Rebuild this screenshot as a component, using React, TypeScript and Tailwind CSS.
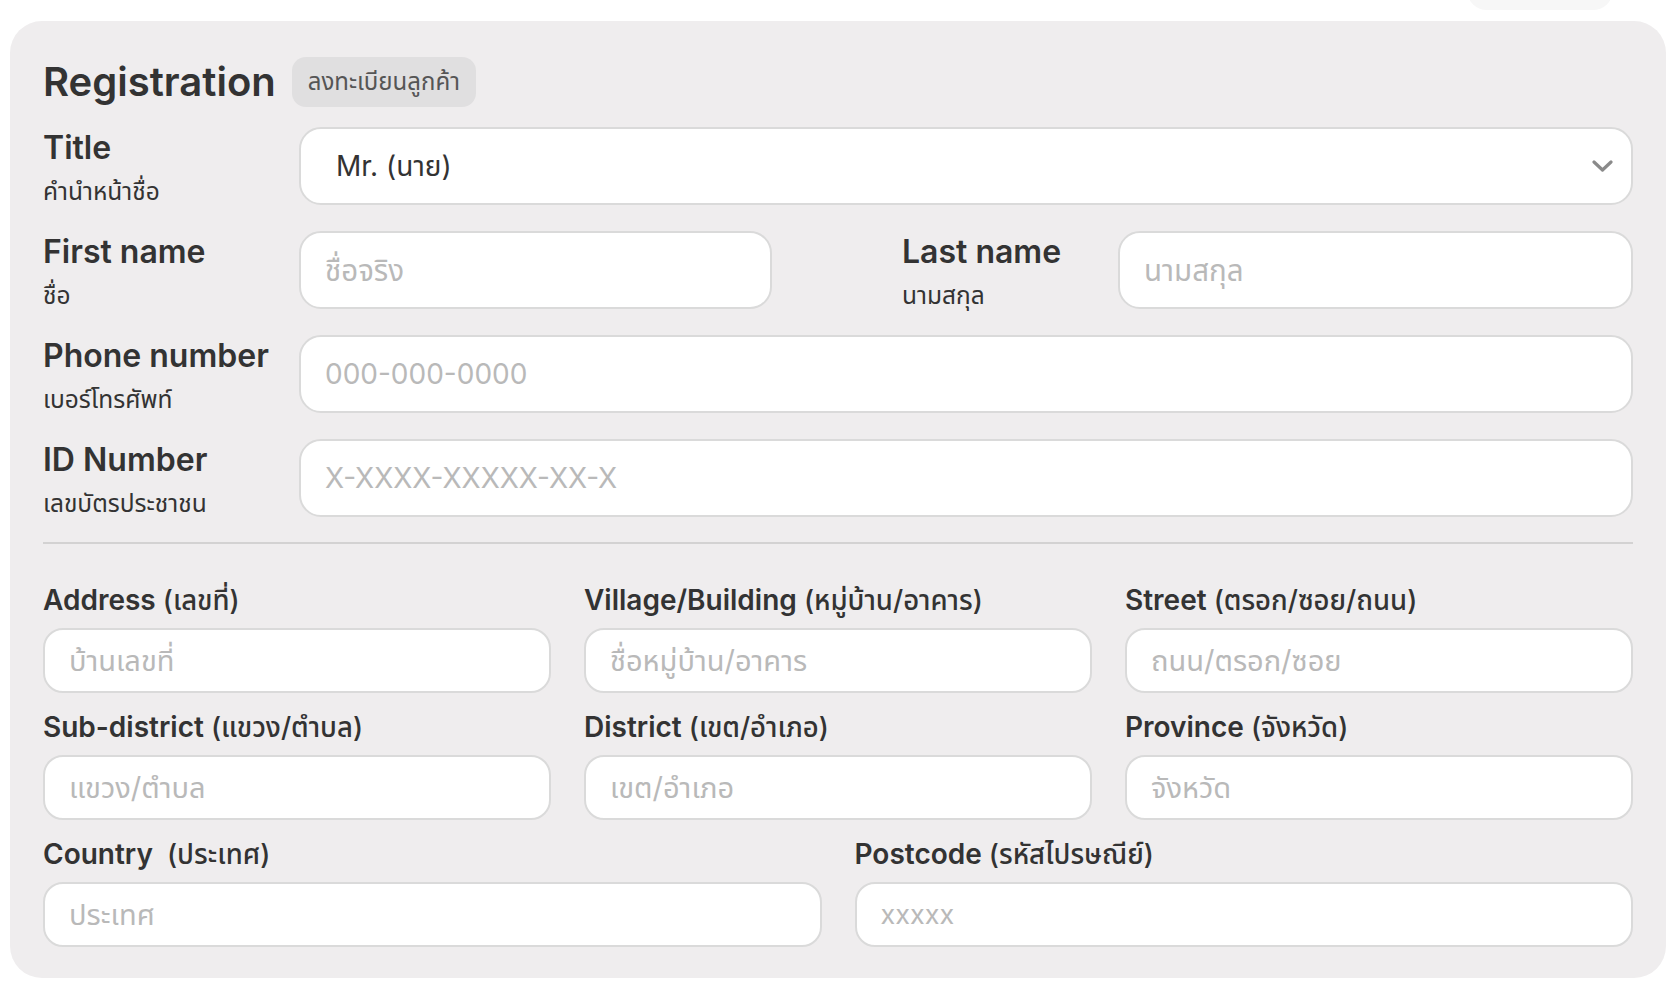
import React from "react";

const font = {
  fontFamily: "Inter, 'Noto Sans Thai', 'Noto Sans Thai UI', 'Noto Sans', 'Liberation Sans', sans-serif",
};

function BigLabel({ en, th }: { en: string; th: string }) {
  return (
    <div className="flex h-[78px] flex-col pt-[2px]">
      <span className="h-[38px] text-[32px] font-semibold leading-[38px] text-[#333]">{en}</span>
      <span className="mt-[9px] h-[30px] text-[24.5px] leading-[30px] text-[#333]">{th}</span>
    </div>
  );
}

function BigInput({ placeholder, className = "" }: { placeholder: string; className?: string }) {
  return (
    <input
      placeholder={placeholder}
      className={
        "h-[78px] rounded-[22px] border-2 border-[#dadada] bg-white px-[24px] text-[#333] outline-none placeholder:text-[#b9b9b9] " +
        className
      }
    />
  );
}

function SmallField({
  en,
  th,
  placeholder,
  size = "text-[29px]",
}: {
  en: string;
  th: string;
  placeholder: string;
  size?: string;
}) {
  return (
    <div className="flex flex-col">
      <div className="h-[34px] overflow-visible whitespace-nowrap leading-[34px] text-[#333]">
        <span className="text-[28px] font-semibold">{en}</span>
        <span className="text-[27.5px] font-medium">{th}</span>
      </div>
      <input
        placeholder={placeholder}
        className={
          "mt-[11px] h-[65px] rounded-[20px] border-2 border-[#dadada] bg-white px-[24px] text-[#333] outline-none placeholder:text-[#b9b9b9] " +
          size
        }
      />
    </div>
  );
}

export default function App() {
  return (
    <div style={font} className="relative min-h-screen bg-white pt-[21px]">
      <div className="absolute left-[1467px] top-[-30px] h-[40px] w-[146px] rounded-full bg-[#f7f7f7]" />
      <div className="relative ml-[10px] mr-[14px] rounded-[32px] bg-[#efedee] px-[33px] pb-[31px] pt-[36px]">
        {/* header */}
        <div className="flex h-[50px] items-center gap-[16px]">
          <h1 className="text-[40px] font-semibold text-[#333]">Registration</h1>
          <span className="flex h-[50px] items-center rounded-[14px] bg-[#e0dfe0] px-[16px] text-[24px] text-[#555]">
            ลงทะเบียนลูกค้า
          </span>
        </div>

        <div className="mt-[20px] flex flex-col gap-[26px]">
          {/* title */}
          <div className="flex items-start">
            <div className="w-[256px]">
              <BigLabel en="Title" th="คำนำหน้าชื่อ" />
            </div>
            <div className="relative flex-1">
              <select
                defaultValue="mr"
                className="h-[78px] w-full appearance-none rounded-[22px] border-2 border-[#dadada] bg-white pl-[35px] text-[28px] text-[#333] outline-none"
              >
                <option value="mr">Mr. (นาย)</option>
                <option value="mrs">Mrs. (นาง)</option>
                <option value="ms">Ms. (นางสาว)</option>
              </select>
              <svg
                className="pointer-events-none absolute right-[20px] top-[33px]"
                width="21"
                height="12"
                viewBox="0 0 21 12"
                fill="none"
              >
                <polyline points="2,2 10.5,10 19,2" stroke="#8a8a8a" strokeWidth="3.2" strokeLinecap="round" strokeLinejoin="round" />
              </svg>
            </div>
          </div>

          {/* names */}
          <div className="flex items-start">
            <div className="w-[256px]">
              <BigLabel en="First name" th="ชื่อ" />
            </div>
            <BigInput placeholder="ชื่อจริง" className="w-[473px] text-[29.5px]" />
            <div className="ml-[130px] w-[216px]">
              <BigLabel en="Last name" th="นามสกุล" />
            </div>
            <BigInput placeholder="นามสกุล" className="flex-1 text-[29.5px]" />
          </div>

          <div className="flex items-start">
            <div className="w-[256px]">
              <BigLabel en="Phone number" th="เบอร์โทรศัพท์" />
            </div>
            <BigInput placeholder="000-000-0000" className="flex-1 text-[28px]" />
          </div>

          <div className="flex items-start">
            <div className="w-[256px]">
              <BigLabel en="ID Number" th="เลขบัตรประชาชน" />
            </div>
            <BigInput placeholder="X-XXXX-XXXXX-XX-X" className="flex-1 text-[28px]" />
          </div>
        </div>

        <div className="mt-[25px] h-[2px] bg-[#d3d2d2]" />

        <div className="mt-[39px] grid grid-cols-3 gap-x-[33px] gap-y-[17px]">
          <SmallField en="Address " th="(เลขที่)" placeholder="บ้านเลขที่" />
          <SmallField en="Village/Building " th="(หมู่บ้าน/อาคาร)" placeholder="ชื่อหมู่บ้าน/อาคาร" />
          <SmallField en="Street " th="(ตรอก/ซอย/ถนน)" placeholder="ถนน/ตรอก/ซอย" />
          <SmallField en="Sub-district " th="(แขวง/ตำบล)" placeholder="แขวง/ตำบล" />
          <SmallField en="District " th="(เขต/อำเภอ)" placeholder="เขต/อำเภอ" />
          <SmallField en="Province " th="(จังหวัด)" placeholder="จังหวัด" />
        </div>
        <div className="mt-[17px] grid grid-cols-2 gap-x-[33px]">
          <SmallField en={"Country\u00a0 "} th="(ประเทศ)" placeholder="ประเทศ" />
          <SmallField en="Postcode " th="(รหัสไปรษณีย์)" placeholder="xxxxx" size="text-[27px]" />
        </div>
      </div>
    </div>
  );
}
